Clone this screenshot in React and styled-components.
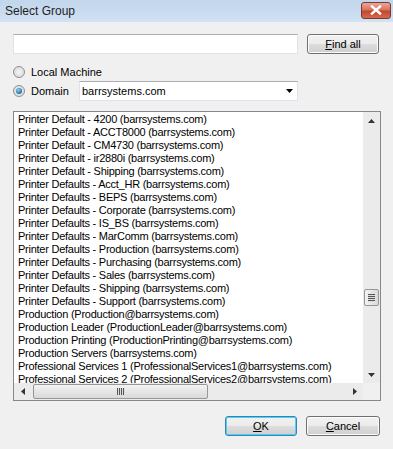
import React from "react";
import styled, { createGlobalStyle } from "styled-components";

const Global = createGlobalStyle`
  html, body { margin: 0; padding: 0; background: #f0f0f0; }
  * { box-sizing: border-box; }
`;

const Dialog = styled.div`
  width: 393px;
  height: 449px;
  background: #f0f0f0;
  display: flex;
  flex-direction: column;
  font-family: "Liberation Sans", Arial, sans-serif;
  font-size: 11px;
  color: #000;
  overflow: hidden;
`;

const TitleBar = styled.div`
  height: 22px;
  flex: none;
  display: flex;
  align-items: center;
  justify-content: space-between;
  padding: 0 2px 0 5px;
  background: linear-gradient(#c2d6ec, #cadcf0 60%, #d2e2f4);
`;

const Title = styled.span`
  font-size: 12px;
  color: #1e1e1e;
  margin-top: -1px;
`;

const CloseBtn = styled.div`
  width: 30px;
  height: 17px;
  margin-top: -2px;
  border: 1px solid #7a3a32;
  border-radius: 3px;
  background: linear-gradient(#e9a99a, #d6735f 45%, #c4462f 55%, #d46a4f);
  display: flex;
  align-items: center;
  justify-content: center;
`;

const Body = styled.div`
  flex: 1;
  display: flex;
  flex-direction: column;
  padding: 12px 12px 0 13px;
`;

const SearchRow = styled.div`
  display: flex;
  align-items: center;
  gap: 9px;
  height: 20px;
`;

const TextInput = styled.div`
  width: 285px;
  height: 20px;
  background: #fff;
  border: 1px solid #e2e3ea;
  border-top-color: #abadb3;
`;

const Button = styled.div`
  width: ${(p) => p.$w}px;
  height: 20px;
  border: 1px solid ${(p) => (p.$default ? "#3c7fb1" : "#707070")};
  border-radius: 3px;
  background: linear-gradient(#f2f2f2, #ebebeb 50%, #dddddd 50%, #cfcfcf);
  box-shadow: ${(p) => (p.$default ? "inset 0 0 0 1px #48d4f8" : "inset 0 0 0 1px #fcfcfc")};
  display: flex;
  align-items: center;
  justify-content: center;
  font-size: 11px;
  u { text-decoration: underline; }
`;

const RadioRow = styled.label`
  display: flex;
  align-items: center;
  height: ${(p) => p.$h}px;
  margin-top: ${(p) => p.$mt}px;
`;

const RadioCircle = styled.span`
  width: 12px;
  height: 12px;
  border-radius: 50%;
  border: 1px solid #8e8f8f;
  background: radial-gradient(circle at 50% 50%, #f4f4f4, #d4d4d4);
  display: flex;
  align-items: center;
  justify-content: center;
  flex: none;
  &::after {
    content: "";
    display: ${(p) => (p.$on ? "block" : "none")};
    width: 6px;
    height: 6px;
    border-radius: 50%;
    background: radial-gradient(circle at 40% 35%, #8ad6f7, #1a6fa8 70%, #0f4f7e);
  }
`;

const RadioLabel = styled.span`
  margin-left: 6px;
  width: ${(p) => (p.$w ? p.$w + "px" : "auto")};
`;

const Combo = styled.div`
  width: 219px;
  height: 20px;
  background: #fff;
  border: 1px solid #e2e3ea;
  border-top-color: #abadb3;
  display: flex;
  align-items: center;
  justify-content: space-between;
  padding: 0 4px 0 2px;
`;

const ListBox = styled.div`
  margin-top: 10px;
  width: 368px;
  height: 290px;
  border: 1px solid #828790;
  background: #fff;
  display: grid;
  grid-template-columns: 1fr 17px;
  grid-template-rows: 1fr 17px;
`;

const Rows = styled.div`
  overflow: hidden;
  padding: 1px 0 0 4px;
`;

const Row = styled.div`
  height: 13px;
  line-height: 13px;
  white-space: nowrap;
  font-size: 11px;
  letter-spacing: -0.25px;
`;

const Track = styled.div`
  background: #ebebeb;
  display: flex;
  flex-direction: ${(p) => (p.$v ? "column" : "row")};
  align-items: center;
  justify-content: space-between;
  position: relative;
`;

const Arrow = styled.div`
  width: 17px;
  height: 17px;
  display: flex;
  align-items: center;
  justify-content: center;
  flex: none;
`;

const VThumbWrap = styled.div`
  flex: 1;
  width: 100%;
  display: flex;
  flex-direction: column;
  align-items: center;
  padding-top: 160px;
`;

const VThumb = styled.div`
  width: 15px;
  height: 17px;
  border: 1px solid #979797;
  border-radius: 2px;
  background: linear-gradient(90deg, #f3f3f3, #e6e6e6 50%, #d9d9d9);
  display: flex;
  flex-direction: column;
  align-items: center;
  justify-content: center;
  gap: 1px;
  span { width: 7px; height: 1px; background: #555; box-shadow: 0 1px 0 #ddd; }
`;

const HThumbWrap = styled.div`
  flex: 1;
  height: 100%;
  display: flex;
  align-items: center;
  padding-left: 2px;
`;

const HThumb = styled.div`
  width: 175px;
  height: 15px;
  border: 1px solid #979797;
  border-radius: 2px;
  background: linear-gradient(#f3f3f3, #e6e6e6 50%, #d9d9d9);
  display: flex;
  align-items: center;
  justify-content: center;
  gap: 1px;
  span { width: 1px; height: 7px; background: #555; box-shadow: 1px 0 0 #ddd; }
`;

const Corner = styled.div`
  background: #f0f0f0;
`;

const Footer = styled.div`
  display: flex;
  justify-content: flex-end;
  gap: 9px;
  margin-top: 15px;
  padding-right: 1px;
`;

const items = [
  "Printer Default - 4200 (barrsystems.com)",
  "Printer Default - ACCT8000 (barrsystems.com)",
  "Printer Default - CM4730 (barrsystems.com)",
  "Printer Default - ir2880i (barrsystems.com)",
  "Printer Default - Shipping (barrsystems.com)",
  "Printer Defaults - Acct_HR (barrsystems.com)",
  "Printer Defaults - BEPS (barrsystems.com)",
  "Printer Defaults - Corporate (barrsystems.com)",
  "Printer Defaults - IS_BS (barrsystems.com)",
  "Printer Defaults - MarComm (barrsystems.com)",
  "Printer Defaults - Production (barrsystems.com)",
  "Printer Defaults - Purchasing (barrsystems.com)",
  "Printer Defaults - Sales (barrsystems.com)",
  "Printer Defaults - Shipping (barrsystems.com)",
  "Printer Defaults - Support (barrsystems.com)",
  "Production (Production@barrsystems.com)",
  "Production Leader (ProductionLeader@barrsystems.com)",
  "Production Printing (ProductionPrinting@barrsystems.com)",
  "Production Servers (barrsystems.com)",
  "Professional Services 1 (ProfessionalServices1@barrsystems.com)",
  "Professional Services 2 (ProfessionalServices2@barrsystems.com)",
];

const Tri = ({ dir, color = "#000" }) => {
  const pts = {
    up: "0,4 3.5,0 7,4",
    down: "0,0 7,0 3.5,4",
    left: "4,0 4,7 0,3.5",
    right: "0,0 0,7 4,3.5",
  }[dir];
  const v = dir === "up" || dir === "down";
  return (
    <svg width={v ? 7 : 4} height={v ? 4 : 7} viewBox={v ? "0 0 7 4" : "0 0 4 7"}>
      <polygon points={pts} fill={color} />
    </svg>
  );
};

export default function App() {
  return (
    <Dialog>
      <Global />
      <TitleBar>
        <Title>Select Group</Title>
        <CloseBtn>
          <svg width="12" height="10" viewBox="0 0 12 10">
            <path d="M2 1.5 L10 8.5 M10 1.5 L2 8.5" stroke="#fff" strokeWidth="2.4" strokeLinecap="square" />
            <path d="M2 1.5 L10 8.5 M10 1.5 L2 8.5" stroke="#fff" strokeWidth="1.6" />
          </svg>
        </CloseBtn>
      </TitleBar>
      <Body>
        <SearchRow>
          <TextInput />
          <Button $w={72}>
            <span><u>F</u>ind all</span>
          </Button>
        </SearchRow>
        <RadioRow $h={14} $mt={11}>
          <RadioCircle />
          <RadioLabel>Local Machine</RadioLabel>
        </RadioRow>
        <RadioRow $h={20} $mt={2}>
          <RadioCircle $on />
          <RadioLabel $w={48}>Domain</RadioLabel>
          <Combo>
            <span>barrsystems.com</span>
            <Tri dir="down" />
          </Combo>
        </RadioRow>
        <ListBox>
          <Rows>
            {items.map((t) => (
              <Row key={t}>{t}</Row>
            ))}
          </Rows>
          <Track $v>
            <Arrow><Tri dir="up" color="#333" /></Arrow>
            <VThumbWrap>
              <VThumb><span /><span /><span /><span /></VThumb>
            </VThumbWrap>
            <Arrow><Tri dir="down" color="#333" /></Arrow>
          </Track>
          <Track>
            <Arrow><Tri dir="left" color="#333" /></Arrow>
            <HThumbWrap>
              <HThumb><span /><span /><span /><span /></HThumb>
            </HThumbWrap>
            <Arrow><Tri dir="right" color="#333" /></Arrow>
          </Track>
          <Corner />
        </ListBox>
        <Footer>
          <Button $w={72} $default>
            <span><u>O</u>K</span>
          </Button>
          <Button $w={74}>
            <span><u>C</u>ancel</span>
          </Button>
        </Footer>
      </Body>
    </Dialog>
  );
}
